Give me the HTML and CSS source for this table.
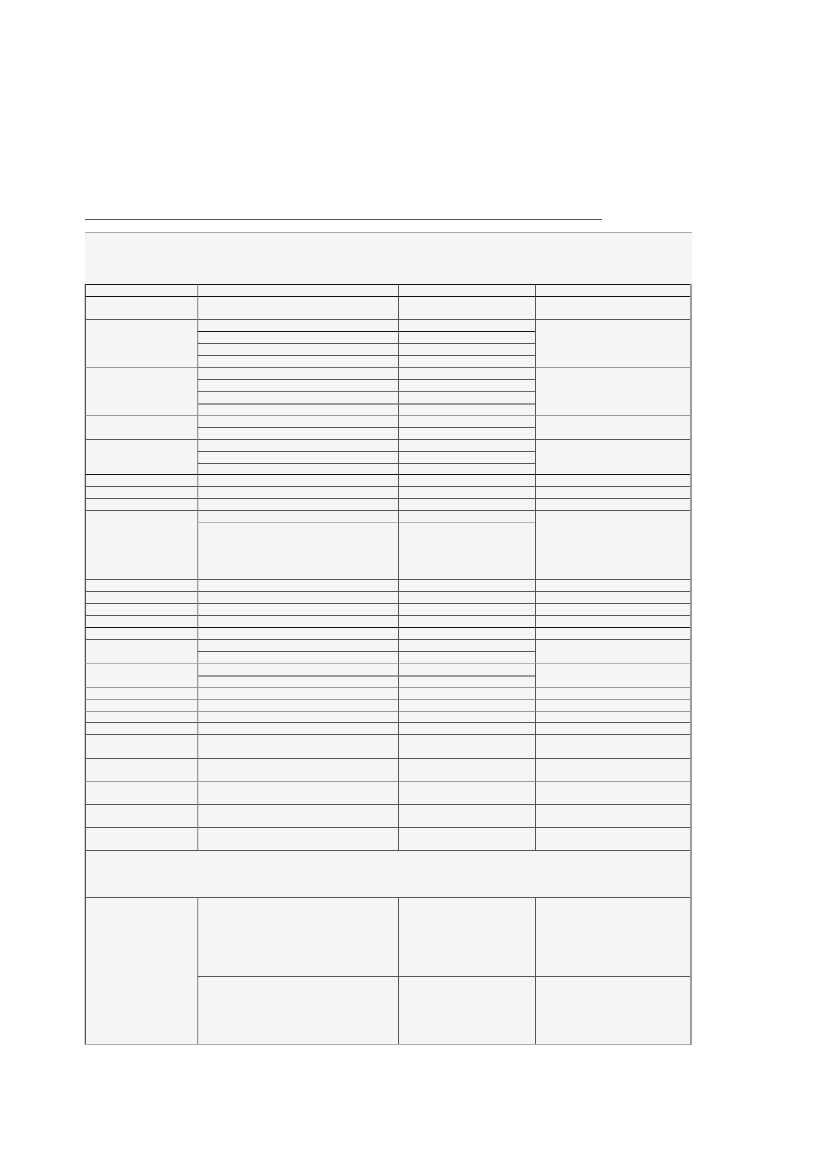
FILE: index.html
```html
<!DOCTYPE html>
<html>
<head>
<meta charset="utf-8">
<link rel="stylesheet" href="styles.css">
</head>
<body>
<div class="page">
  <div class="rule"></div>
  <div class="caption"></div>
  <div class="tbl">
    <!-- r1 header -->
    <div class="c k"></div><div class="c b k"></div><div class="c k"></div><div class="c k"></div>
    <!-- r2 -->
    <div class="c k"></div><div class="c b k"></div><div class="c k"></div><div class="c k"></div>
    <!-- group A -->
    <div class="c s4"></div><div class="c b"></div><div class="c"></div><div class="c s4"></div>
    <div class="c b k"></div><div class="c k"></div>
    <div class="c b"></div><div class="c"></div>
    <div class="c b"></div><div class="c"></div>
    <!-- group B -->
    <div class="c s4 g"></div><div class="c b m"></div><div class="c m"></div><div class="c s4 g"></div>
    <div class="c b"></div><div class="c"></div>
    <div class="c b m"></div><div class="c m"></div>
    <div class="c b g t2"></div><div class="c g t2"></div>
    <!-- group C -->
    <div class="c s2 g"></div><div class="c b g"></div><div class="c g"></div><div class="c s2 g"></div>
    <div class="c b"></div><div class="c"></div>
    <!-- group D -->
    <div class="c s3"></div><div class="c b"></div><div class="c"></div><div class="c s3"></div>
    <div class="c b"></div><div class="c"></div>
    <div class="c b"></div><div class="c"></div>
    <!-- r16-18 -->
    <div class="c k"></div><div class="c b k"></div><div class="c k"></div><div class="c k"></div>
    <div class="c"></div><div class="c b"></div><div class="c"></div><div class="c"></div>
    <div class="c"></div><div class="c b"></div><div class="c"></div><div class="c"></div>
    <!-- group E -->
    <div class="c s2"></div><div class="c b"></div><div class="c"></div><div class="c s2"></div>
    <div class="c b l"></div><div class="c l"></div>
    <!-- r21-25 -->
    <div class="c"></div><div class="c b"></div><div class="c"></div><div class="c"></div>
    <div class="c"></div><div class="c b"></div><div class="c"></div><div class="c"></div>
    <div class="c"></div><div class="c b"></div><div class="c"></div><div class="c"></div>
    <div class="c"></div><div class="c b"></div><div class="c"></div><div class="c"></div>
    <div class="c k"></div><div class="c b k"></div><div class="c k"></div><div class="c k"></div>
    <!-- group F -->
    <div class="c s2"></div><div class="c b"></div><div class="c"></div><div class="c s2"></div>
    <div class="c b"></div><div class="c"></div>
    <!-- group G -->
    <div class="c s2 l"></div><div class="c b l"></div><div class="c l"></div><div class="c s2 l"></div>
    <div class="c b g t2"></div><div class="c g t2"></div>
    <!-- r30-32 -->
    <div class="c g"></div><div class="c b g"></div><div class="c g"></div><div class="c g"></div>
    <div class="c g"></div><div class="c b g"></div><div class="c g"></div><div class="c g"></div>
    <div class="c g"></div><div class="c b g"></div><div class="c g"></div><div class="c g"></div>
    <!-- r33-38 -->
    <div class="c"></div><div class="c b"></div><div class="c"></div><div class="c"></div>
    <div class="c"></div><div class="c b"></div><div class="c"></div><div class="c"></div>
    <div class="c"></div><div class="c b"></div><div class="c"></div><div class="c"></div>
    <div class="c g"></div><div class="c b g"></div><div class="c g"></div><div class="c g"></div>
    <div class="c"></div><div class="c b"></div><div class="c"></div><div class="c"></div>
    <div class="c"></div><div class="c b"></div><div class="c"></div><div class="c"></div>
    <!-- r39 full width -->
    <div class="c w"></div>
    <!-- group H -->
    <div class="c s2"></div><div class="c b"></div><div class="c"></div><div class="c"></div>
    <div class="c b"></div><div class="c"></div><div class="c"></div>
  </div>
</div>
</body>
</html>
```
FILE: styles.css
```css
html, body {
  margin: 0;
  padding: 0;
  background: #ffffff;
  font-family: "Liberation Sans", Arial, sans-serif;
}

.page {
  padding: 219px 0 0 85px;
}

.rule {
  width: 517px;
  height: 1px;
  background: #555555;
}

.caption {
  margin-top: 12px;
  width: 607px;
  height: 52px;
  box-sizing: border-box;
  border-top: 1px solid #aaaaaa;
  background: #f5f5f5;
}

.tbl {
  display: grid;
  width: 607px;
  box-sizing: border-box;
  grid-template-columns: 112px 201px 137px 155px;
  grid-template-rows: 12px 23px repeat(12, 12px) 11px repeat(4, 12px) 57px repeat(11, 12px) 11px 12px 24px repeat(4, 23px) 47px 79px 68px;
  border-right: 2px solid #9c9c9c;
  border-bottom: 1px solid #aaaaaa;
  background: #f5f5f5;
  box-shadow: -1px 0 0 #cfcfcf;
}

.c {
  box-sizing: border-box;
  border-top: 1px solid #555555;
  border-left: 1px solid #555555;
  background: #f5f5f5;
}

.c.b {
  border-left-color: #9a9a9a;
  box-shadow: inset 1px 0 0 #dddddd;
}

.c.k { border-top-color: #111111; }
.c.g { border-top-color: #9a9a9a; }
.c.l { border-top-color: #b4b4b4; }
.c.m { border-top-color: #6a6a6a; }
.c.t2 { border-top-width: 2px; }

.s2 { grid-row: span 2; }
.s3 { grid-row: span 3; }
.s4 { grid-row: span 4; }
.w { grid-column: span 4; }
```
